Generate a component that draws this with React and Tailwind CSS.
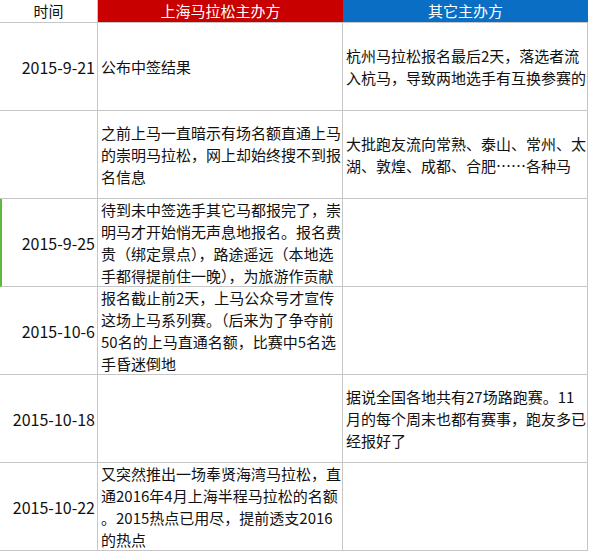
import React from 'react'

const rows = [
    {
        date: '2015-9-21',
        sh: ['公布中签结果'],
        other: ['杭州马拉松报名最后2天，落选者流', '入杭马，导致两地选手有互换参赛的'],
    },
    {
        date: '',
        sh: ['之前上马一直暗示有场名额直通上马', '的崇明马拉松，网上却始终搜不到报', '名信息'],
        other: ['大批跑友流向常熟、泰山、常州、太', '湖、敦煌、成都、合肥……各种马'],
    },
    {
        date: '2015-9-25',
        mark: true,
        sh: ['待到未中签选手其它马都报完了，崇', '明马才开始悄无声息地报名。报名费', '贵（绑定景点），路途遥远（本地选', '手都得提前住一晚），为旅游作贡献'],
        other: [],
    },
    {
        date: '2015-10-6',
        sh: ['报名截止前2天，上马公众号才宣传', '这场上马系列赛。（后来为了争夺前', '50名的上马直通名额，比赛中5名选', '手昏迷倒地'],
        other: [],
    },
    {
        date: '2015-10-18',
        sh: [],
        other: ['据说全国各地共有27场路跑赛。11', '月的每个周末也都有赛事，跑友多已', '经报好了'],
    },
    {
        date: '2015-10-22',
        sh: ['又突然推出一场奉贤海湾马拉松，直', '通2016年4月上海半程马拉松的名额', '。2015热点已用尽，提前透支2016', '的热点'],
        other: [],
    },
]

const Lines = ({ lines }) => (
    <div className="flex flex-col">
        {lines.map((l, i) => (
            <div key={i} className="whitespace-nowrap">{l}</div>
        ))}
    </div>
)

export default function App() {
    return (
        <div className="w-[590px] h-[552px] bg-white text-[15px] leading-[22px] text-[#111]" style={{ fontFamily: '"Noto Sans CJK SC", "Noto Sans", sans-serif' }}>
            <div className="grid grid-cols-[98px_245px_245px] grid-rows-[23px_repeat(6,88px)]">
                {/* header */}
                <div className="border-r border-b border-[#c6c6c6] flex items-center justify-center">时间</div>
                <div className="border-b border-[#c6c6c6] bg-[#c80000] text-white flex items-center justify-center">上海马拉松主办方</div>
                <div className="border-b border-[#c6c6c6] bg-[#0a6fc4] text-white flex items-center justify-center">其它主办方</div>

                {rows.map((r, i) => (
                    <React.Fragment key={i}>
                        <div className={`border-r border-b border-[#c6c6c6] flex items-center justify-end pr-[2px] text-[16px] ${r.mark ? 'border-l-2 border-l-[#5fb83a]' : ''}`}>
                            {r.date}
                        </div>
                        <div className="border-r border-b border-[#c6c6c6] flex items-center pl-[3px] overflow-hidden">
                            <Lines lines={r.sh} />
                        </div>
                        <div className="border-r border-b border-[#c6c6c6] flex items-center pl-[3px] overflow-hidden">
                            <Lines lines={r.other} />
                        </div>
                    </React.Fragment>
                ))}
            </div>
        </div>
    )
}
